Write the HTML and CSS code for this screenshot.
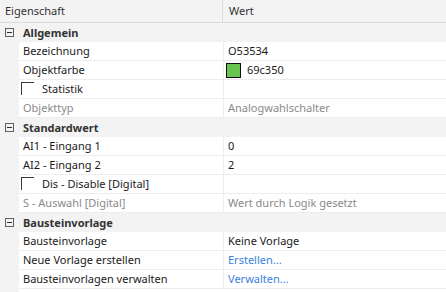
FILE: index.html
```html
<!DOCTYPE html>
<html>
<head>
<meta charset="utf-8">
<link rel="stylesheet" href="styles.css">
</head>
<body>
<div class="grid">
  <div class="header">
    <div class="h-name">Eigenschaft</div>
    <div class="h-val">Wert</div>
  </div>

  <div class="cat"><span class="toggle"></span><span class="cat-label">Allgemein</span></div>
  <div class="row"><div class="indent"></div><div class="name">Bezeichnung</div><div class="val">O53534</div></div>
  <div class="row"><div class="indent"></div><div class="name">Objektfarbe</div><div class="val"><span class="swatch"></span>69c350</div></div>
  <div class="row"><div class="indent"></div><div class="name check"><span class="box"></span>Statistik</div><div class="val"></div></div>
  <div class="row disabled"><div class="indent"></div><div class="name">Objekttyp</div><div class="val">Analogwahlschalter</div></div>

  <div class="cat"><span class="toggle"></span><span class="cat-label">Standardwert</span></div>
  <div class="row"><div class="indent"></div><div class="name">AI1 - Eingang 1</div><div class="val">0</div></div>
  <div class="row"><div class="indent"></div><div class="name">AI2 - Eingang 2</div><div class="val">2</div></div>
  <div class="row"><div class="indent"></div><div class="name check"><span class="box"></span>Dis - Disable [Digital]</div><div class="val"></div></div>
  <div class="row disabled"><div class="indent"></div><div class="name">S - Auswahl [Digital]</div><div class="val">Wert durch Logik gesetzt</div></div>

  <div class="cat"><span class="toggle"></span><span class="cat-label">Bausteinvorlage</span></div>
  <div class="row"><div class="indent"></div><div class="name">Bausteinvorlage</div><div class="val">Keine Vorlage</div></div>
  <div class="row"><div class="indent"></div><div class="name">Neue Vorlage erstellen</div><div class="val link">Erstellen...</div></div>
  <div class="row"><div class="indent"></div><div class="name">Bausteinvorlagen verwalten</div><div class="val link">Verwalten...</div></div>
  <div class="filler"><div class="indent"></div></div>
</div>
</body>
</html>
```

FILE: styles.css
```css
html, body {
  margin: 0;
  padding: 0;
  background: #ffffff;
}
body {
  font-family: "Noto Sans", "Open Sans", sans-serif;
  font-size: 11px;
  color: #1a1a1a;
  width: 446px;
  height: 292px;
  overflow: hidden;
}
.grid {
  display: flex;
  flex-direction: column;
}
.header {
  display: grid;
  grid-template-columns: 223px 1fr;
  height: 23px;
  box-sizing: border-box;
  background: #f3f3f3;
  border-bottom: 1px solid #dcdcdc;
  color: #333333;
}
.h-name {
  padding-left: 5px;
  line-height: 22px;
  border-right: 1px solid #dcdcdc;
}
.h-val {
  padding-left: 6px;
  line-height: 22px;
}
.cat {
  display: flex;
  align-items: center;
  height: 19px;
  background: #f3f3f3;
  font-weight: bold;
  color: #333333;
}
.toggle {
  position: relative;
  width: 9px;
  height: 9px;
  box-sizing: border-box;
  border: 1px solid #606060;
  margin-left: 5px;
  margin-right: 9px;
}
.toggle::after {
  content: "";
  position: absolute;
  left: 1px;
  top: 3px;
  width: 5px;
  height: 1px;
  background: #303030;
}
.cat-label {
  line-height: 19px;
}
.row {
  display: grid;
  grid-template-columns: 19px 204px 1fr;
  height: 19px;
}
.indent {
  background: #f3f3f3;
}
.name, .val {
  box-sizing: border-box;
  height: 19px;
  line-height: 18px;
  border-bottom: 1px solid #ededed;
  white-space: nowrap;
  overflow: hidden;
}
.name {
  padding-left: 4px;
}
.val {
  padding-left: 4px;
  border-left: 1px solid #ededed;
  display: flex;
  align-items: center;
}
.disabled .name, .disabled .val {
  color: #8a8a8a;
}
.link {
  color: #3a7fdc;
}
.swatch {
  width: 15px;
  height: 15px;
  box-sizing: border-box;
  border: 1px solid #111111;
  background: #69c350;
  margin-left: -2px;
  margin-right: 6px;
}
.check {
  display: flex;
  align-items: center;
  padding-left: 2px;
}
.box {
  width: 13px;
  height: 13px;
  box-sizing: border-box;
  border-top: 1px solid #3a3a3a;
  border-left: 1px solid #3a3a3a;
  margin-right: 8px;
  margin-top: -2px;
}
.filler {
  display: grid;
  grid-template-columns: 19px 1fr;
  height: 4px;
}
```
